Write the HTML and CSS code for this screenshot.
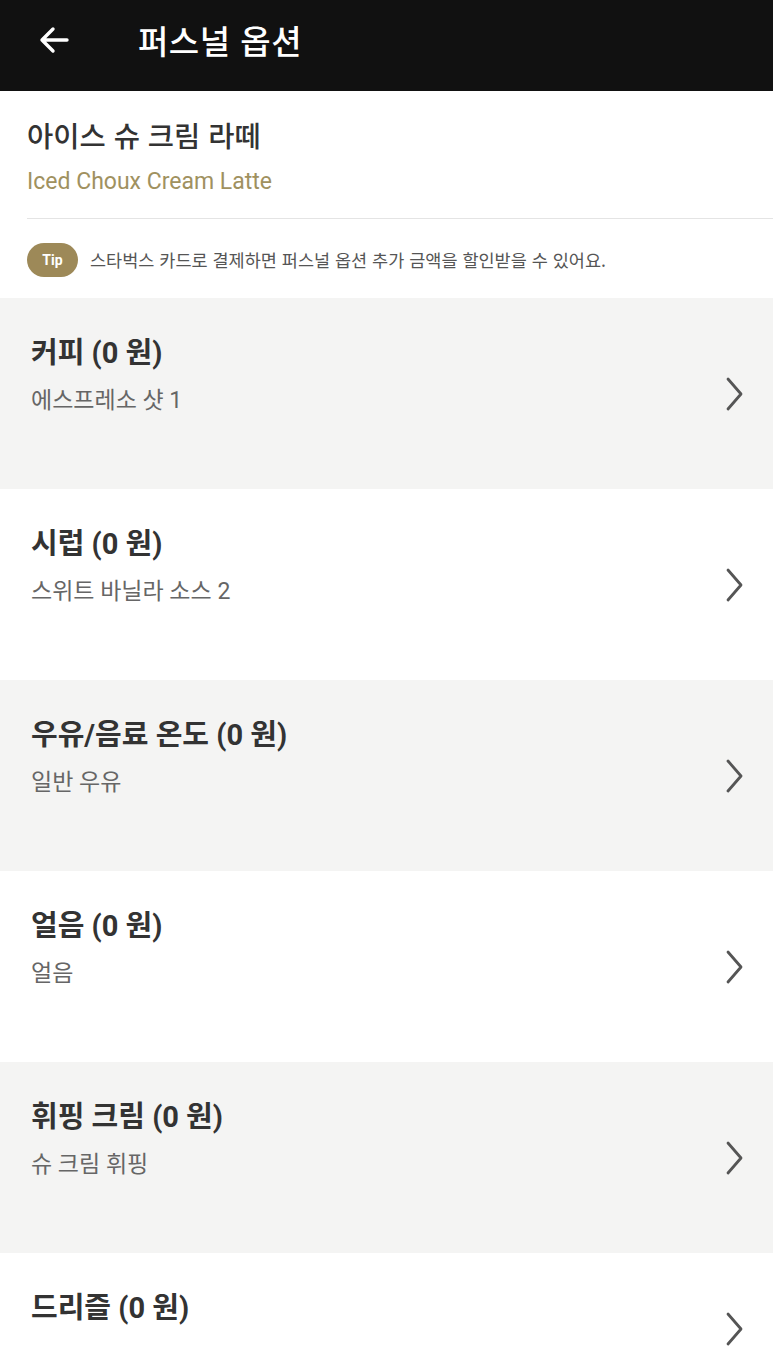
FILE: index.html
```html
<!DOCTYPE html>
<html lang="ko">
<head>
<meta charset="utf-8">
<link rel="stylesheet" href="styles.css">
</head>
<body>
<header class="topbar">
  <svg class="back" width="32" height="28" viewBox="0 0 32 28"><path d="M29 14H4M15 3L4 14l11 11" fill="none" stroke="#fff" stroke-width="3.4" stroke-linecap="round" stroke-linejoin="round"/></svg>
  <h1 class="title">퍼스널 옵션</h1>
</header>
<section class="product">
  <div class="name-ko">아이스 슈 크림 라떼</div>
  <div class="name-en">Iced Choux Cream Latte</div>
  <div class="divider"></div>
  <div class="tip"><span class="badge">Tip</span><span class="tip-text">스타벅스 카드로 결제하면 퍼스널 옵션 추가 금액을 할인받을 수 있어요.</span></div>
</section>
<ul class="options">
  <li class="opt gray"><div class="txt"><div class="opt-title">커피 (0 원)</div><div class="opt-sub">에스프레소 샷 1</div></div><svg class="chev" width="20" height="34" viewBox="0 0 20 34"><path d="M3 2l13 15L3 32" fill="none" stroke="#555" stroke-width="2.8" stroke-linecap="round" stroke-linejoin="round"/></svg></li>
  <li class="opt"><div class="txt"><div class="opt-title">시럽 (0 원)</div><div class="opt-sub">스위트 바닐라 소스 2</div></div><svg class="chev" width="20" height="34" viewBox="0 0 20 34"><path d="M3 2l13 15L3 32" fill="none" stroke="#555" stroke-width="2.8" stroke-linecap="round" stroke-linejoin="round"/></svg></li>
  <li class="opt gray"><div class="txt"><div class="opt-title">우유/음료 온도 (0 원)</div><div class="opt-sub">일반 우유</div></div><svg class="chev" width="20" height="34" viewBox="0 0 20 34"><path d="M3 2l13 15L3 32" fill="none" stroke="#555" stroke-width="2.8" stroke-linecap="round" stroke-linejoin="round"/></svg></li>
  <li class="opt"><div class="txt"><div class="opt-title">얼음 (0 원)</div><div class="opt-sub">얼음</div></div><svg class="chev" width="20" height="34" viewBox="0 0 20 34"><path d="M3 2l13 15L3 32" fill="none" stroke="#555" stroke-width="2.8" stroke-linecap="round" stroke-linejoin="round"/></svg></li>
  <li class="opt gray"><div class="txt"><div class="opt-title">휘핑 크림 (0 원)</div><div class="opt-sub">슈 크림 휘핑</div></div><svg class="chev" width="20" height="34" viewBox="0 0 20 34"><path d="M3 2l13 15L3 32" fill="none" stroke="#555" stroke-width="2.8" stroke-linecap="round" stroke-linejoin="round"/></svg></li>
  <li class="opt last"><div class="txt"><div class="opt-title">드리즐 (0 원)</div></div><svg class="chev" width="20" height="34" viewBox="0 0 20 34"><path d="M3 2l13 15L3 32" fill="none" stroke="#555" stroke-width="2.8" stroke-linecap="round" stroke-linejoin="round"/></svg></li>
</ul>
</body>
</html>
```
FILE: styles.css
```css
* { box-sizing: border-box; }
html, body { margin: 0; padding: 0; background: #fff; }
body { font-family: Roboto, "Noto Sans CJK KR", sans-serif; color: #333; overflow: hidden; height: 1366px; }
.topbar { height: 91px; background: #111; display: flex; align-items: center; padding-left: 38px; padding-bottom: 12px; }
.back { display: block; }
.title { margin: 0 0 0 68px; color: #fff; font-size: 33px; font-weight: 500; font-family: "Noto Sans CJK KR", sans-serif; letter-spacing: 0.5px; line-height: 40px; }
.product { padding: 24px 0 0 27px; }
.name-ko { font-family: "Noto Sans CJK KR", sans-serif; font-size: 28.5px; font-weight: 500; color: #333; line-height: 40px; }
.name-en { font-size: 23px; color: #a0915f; line-height: 30px; margin-top: 12px; }
.divider { height: 1px; background: #e4e4e4; margin-top: 21px; }
.tip { display: flex; align-items: center; height: 79px; padding-top: 2px; }
.badge { width: 51px; height: 34px; border-radius: 17px; background: #9d8958; color: #fff; font-size: 14px; font-weight: 700; display: flex; align-items: center; justify-content: center; flex: none; }
.tip-text { margin-left: 12px; font-family: "Noto Sans CJK KR", sans-serif; font-size: 17.5px; color: #555; white-space: nowrap; }
.options { list-style: none; margin: 0; padding: 0; }
.opt { height: 191px; display: flex; align-items: flex-start; justify-content: space-between; padding: 36px 28px 0 31px; }
.opt.gray { background: #f4f4f3; }
.opt.last { height: 113px; }
.opt-title { font-family: Roboto, "Noto Sans CJK KR", sans-serif; font-size: 29px; font-weight: 700; color: #333; line-height: 38px; }
.opt-sub { font-family: Roboto, "Noto Sans CJK KR", sans-serif; font-size: 23px; color: #666; line-height: 30px; margin-top: 14px; }
.chev { margin-top: 43px; display: block; }
.opt.last .chev { margin-top: 23px; }
```
